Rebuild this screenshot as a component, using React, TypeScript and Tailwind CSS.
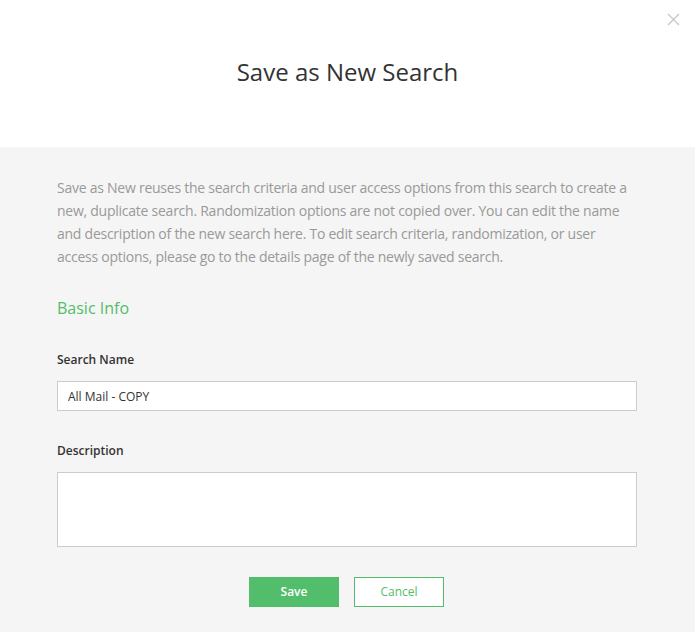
import React from "react";

export default function App() {
  return (
    <div className="w-[695px] h-[632px] flex flex-col bg-[#f5f5f5] font-['Open_Sans',sans-serif] overflow-hidden">
      <div className="relative h-[147px] bg-white flex items-center justify-center shrink-0">
        <h1 className="text-[24px] text-[#333] leading-none -mt-[4px]">Save as New Search</h1>
        <button className="absolute right-[15px] top-[13px] text-[#c8c8c8]">
          <svg width="13" height="13" viewBox="0 0 13 13" fill="none" stroke="currentColor" strokeWidth="1.4">
            <path d="M1 1L12 12M12 1L1 12" />
          </svg>
        </button>
      </div>
      <div className="px-[57px] pt-[29px] flex flex-col">
        <p className="text-[14px] leading-[23px] text-[#999] tracking-[-0.25px]">
          Save as New reuses the search criteria and user access options from this search to create a new, duplicate search. Randomization options are not copied over. You can edit the name and description of the new search here. To edit search criteria, randomization, or user access options, please go to the details page of the newly saved search.
        </p>
        <h2 className="mt-[28px] text-[16px] text-[#52bd6a] leading-[24px]">Basic Info</h2>
        <label className="mt-[31px] text-[12px] font-semibold text-[#333] leading-[18px]">Search Name</label>
        <input
          className="mt-[12px] h-[30px] w-[580px] border border-[#ccc] bg-white px-[10px] text-[12px] text-[#333] outline-none"
          defaultValue="All Mail - COPY"
        />
        <label className="mt-[31px] text-[12px] font-semibold text-[#333] leading-[18px]">Description</label>
        <textarea className="mt-[12px] h-[75px] w-[580px] border border-[#ccc] bg-white resize-none outline-none" />
        <div className="mt-[30px] flex justify-center gap-[15px] -ml-[2px]">
          <button className="w-[90px] h-[30px] bg-[#52bd6a] text-white text-[12px] font-semibold">Save</button>
          <button className="w-[90px] h-[30px] border border-[#52bd6a] bg-white text-[#52bd6a] text-[12px]">Cancel</button>
        </div>
      </div>
    </div>
  );
}
